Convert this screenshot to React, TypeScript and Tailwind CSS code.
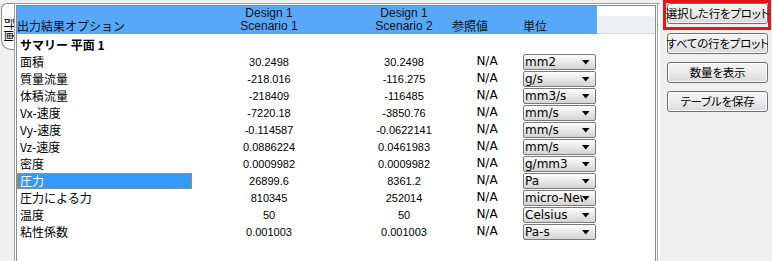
import React from "react";

const JP = "font-['Noto_Sans_CJK_JP',sans-serif]";
const LIB = "font-['Liberation_Sans','Noto_Sans_CJK_JP',sans-serif]";
const DJV = "font-['DejaVu_Sans','Noto_Sans_CJK_JP',sans-serif]";

type Row = { label: string; v1: string; v2: string; unit: string; sel?: boolean };

const rows: Row[] = [
  { label: "面積", v1: "30.2498", v2: "30.2498", unit: "mm2" },
  { label: "質量流量", v1: "-218.016", v2: "-116.275", unit: "g/s" },
  { label: "体積流量", v1: "-218409", v2: "-116485", unit: "mm3/s" },
  { label: "Vx-速度", v1: "-7220.18", v2: "-3850.76", unit: "mm/s" },
  { label: "Vy-速度", v1: "-0.114587", v2: "-0.0622141", unit: "mm/s" },
  { label: "Vz-速度", v1: "0.0886224", v2: "0.0461983", unit: "mm/s" },
  { label: "密度", v1: "0.0009982", v2: "0.0009982", unit: "g/mm3" },
  { label: "圧力", v1: "26899.6", v2: "8361.2", unit: "Pa", sel: true },
  { label: "圧力による力", v1: "810345", v2: "252014", unit: "micro-Newton" },
  { label: "温度", v1: "50", v2: "50", unit: "Celsius" },
  { label: "粘性係数", v1: "0.001003", v2: "0.001003", unit: "Pa-s" },
];

function Select({ value }: { value: string }) {
  return (
    <div className="relative ml-[11px] mt-[1px] flex h-[16px] w-[73px] items-center overflow-hidden rounded-[2px] border border-[#7a7a7a] bg-gradient-to-b from-[#fdfdfd] to-[#d4d4d4]">
      <span className={`${DJV} w-[59px] overflow-hidden whitespace-nowrap pl-[1px] text-[12px] leading-[14px] text-black`}>
        {value}
      </span>
      <svg className="absolute right-[5px] top-[5px]" width="8" height="5" viewBox="0 0 8 5">
        <path d="M0 0 H7.5 L3.75 4.5 Z" fill="#000" />
      </svg>
    </div>
  );
}

function Btn({ children }: { children: React.ReactNode }) {
  return (
    <div
      className={`${JP} flex h-[21px] w-[101px] items-center justify-center whitespace-nowrap rounded-[3px] border border-[#707070] bg-gradient-to-b from-[#f4f4f4] via-[#ebebeb] to-[#d9d9d9] text-[11.5px] leading-none tracking-[-0.2px] text-black shadow-[inset_0_0_0_1px_#fbfbfb] [font-feature-settings:'palt']`}
    >
      {children}
    </div>
  );
}

export default function App() {
  return (
    <div className="flex h-[261px] w-[772px] overflow-hidden bg-[#f0f0f0]">
      {/* left tab strip */}
      <div className="w-[14px] shrink-0 pt-[3px]">
        <div className="relative ml-[1px] h-[47px] w-[13px] overflow-hidden rounded-bl-[10px] rounded-tl-[6px] border border-r-0 border-[#8c8c8c] bg-[#fafafa]">
          <span
            className={`${JP} absolute left-[-4px] top-[20px] block w-[24px] rotate-90 text-[12px] leading-[12px] text-black`}
          >
            計画
          </span>
        </div>
      </div>

      {/* main table panel */}
      <div className="mt-[3px] flex w-[646px] shrink-0 border-l border-t border-[#a0a0a0] bg-white pr-[2px]">
        <div className="flex flex-1 border-r border-[#a0a0a0] px-[1px] pt-[1px]">
          <div className="flex flex-1 flex-col border-l border-r border-t border-[#8c8c8c]">
            {/* header */}
            <div className="flex h-[28px]">
              <div className="flex w-[580px] items-end bg-[#58a8fa] pb-[1px] text-[12px] leading-[13px] text-[#111]">
                <div className={`${JP} w-[207px] pb-[1px]`}>出力結果オプション</div>
                <div className={`${LIB} w-[90px] text-center`}>
                  Design 1<br />Scenario 1
                </div>
                <div className="w-[45px]" />
                <div className={`${LIB} w-[90px] text-center`}>
                  Design 1<br />Scenario 2
                </div>
                <div className={`${JP} w-[42px] pb-[1px] text-center`}>参照値</div>
                <div className="w-[32px]" />
                <div className={`${JP} pb-[1px]`}>単位</div>
              </div>
              <div className="flex-1 border-b border-[#d5d5d5] bg-gradient-to-b from-white from-35% to-[#eeeff1] to-40%" />
            </div>

            {/* summary row */}
            <div className={`${JP} h-[19px] pl-[3px] pt-[3px] text-[12px] font-bold leading-[16px] text-black`}>
              サマリー 平面 1
            </div>

            {/* data rows */}
            {rows.map((r) => (
              <div key={r.label} className="flex h-[17px] items-start text-black">
                <div className="w-[175px] pt-[1px]">
                  {r.sel ? (
                    <div
                      className={`${JP} h-[16px] border border-dotted border-[#c88a4a] bg-[#3399ff] pl-[2px] text-[12px] leading-[14px] text-white`}
                    >
                      {r.label}
                    </div>
                  ) : (
                    <div className={`${JP} pl-[3px] text-[12px] leading-[15px]`}>{r.label}</div>
                  )}
                </div>
                <div className={`${LIB} w-[154px] pt-[2px] text-center text-[11px] leading-[14px]`}>{r.v1}</div>
                <div className={`${LIB} w-[116px] pt-[2px] text-center text-[11px] leading-[14px]`}>{r.v2}</div>
                <div className={`${DJV} w-[50px] pt-[1px] text-center text-[12px] leading-[15px]`}>N/A</div>
                <Select value={r.unit} />
              </div>
            ))}
          </div>
        </div>
      </div>

      {/* right button panel */}
      <div className="flex flex-1 flex-col pl-[3px]">
        <div className="h-[30px] w-[108px] border-[3px] border-[#e3161d] pl-[1px]">
          <Btn>選択した行をプロット</Btn>
        </div>
        <div className="mt-[3px] flex flex-col gap-[8px] pl-[4px]">
          <Btn>すべての行をプロット</Btn>
          <Btn>数量を表示</Btn>
          <Btn>テーブルを保存</Btn>
        </div>
      </div>
    </div>
  );
}
